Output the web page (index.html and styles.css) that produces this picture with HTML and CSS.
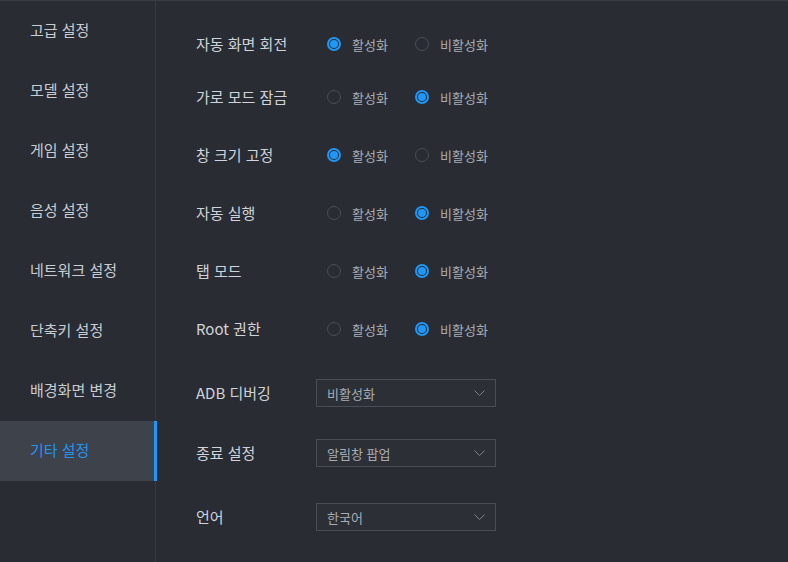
FILE: index.html
```html
<!DOCTYPE html>
<html lang="ko">
<head>
<meta charset="utf-8">
<link rel="stylesheet" href="styles.css">
</head>
<body>
<div class="app">
  <nav class="sidebar">
    <div class="nav-item">고급 설정</div>
    <div class="nav-item">모델 설정</div>
    <div class="nav-item">게임 설정</div>
    <div class="nav-item">음성 설정</div>
    <div class="nav-item">네트워크 설정</div>
    <div class="nav-item">단축키 설정</div>
    <div class="nav-item">배경화면 변경</div>
    <div class="nav-item active">기타 설정</div>
  </nav>
  <main class="content">
    <div class="row r1">
      <div class="label">자동 화면 회전</div>
      <div class="radios">
        <span class="radio on"></span><span class="opt">활성화</span>
        <span class="radio"></span><span class="opt">비활성화</span>
      </div>
    </div>
    <div class="row r2">
      <div class="label">가로 모드 잠금</div>
      <div class="radios">
        <span class="radio"></span><span class="opt">활성화</span>
        <span class="radio on"></span><span class="opt">비활성화</span>
      </div>
    </div>
    <div class="row r3">
      <div class="label">창 크기 고정</div>
      <div class="radios">
        <span class="radio on"></span><span class="opt">활성화</span>
        <span class="radio"></span><span class="opt">비활성화</span>
      </div>
    </div>
    <div class="row r3">
      <div class="label">자동 실행</div>
      <div class="radios">
        <span class="radio"></span><span class="opt">활성화</span>
        <span class="radio on"></span><span class="opt">비활성화</span>
      </div>
    </div>
    <div class="row r3">
      <div class="label">탭 모드</div>
      <div class="radios">
        <span class="radio"></span><span class="opt">활성화</span>
        <span class="radio on"></span><span class="opt">비활성화</span>
      </div>
    </div>
    <div class="row r3">
      <div class="label">Root 권한</div>
      <div class="radios">
        <span class="radio"></span><span class="opt">활성화</span>
        <span class="radio on"></span><span class="opt">비활성화</span>
      </div>
    </div>
    <div class="row r4">
      <div class="label">ADB 디버깅</div>
      <div class="select"><span>비활성화</span>
        <svg class="chev" width="11" height="7" viewBox="0 0 11 7"><polyline points="0.5,0.5 5.5,5.5 10.5,0.5" fill="none" stroke="#7d8189" stroke-width="1"/></svg>
      </div>
    </div>
    <div class="row r5">
      <div class="label">종료 설정</div>
      <div class="select"><span>알림창 팝업</span>
        <svg class="chev" width="11" height="7" viewBox="0 0 11 7"><polyline points="0.5,0.5 5.5,5.5 10.5,0.5" fill="none" stroke="#7d8189" stroke-width="1"/></svg>
      </div>
    </div>
    <div class="row r4">
      <div class="label">언어</div>
      <div class="select"><span>한국어</span>
        <svg class="chev" width="11" height="7" viewBox="0 0 11 7"><polyline points="0.5,0.5 5.5,5.5 10.5,0.5" fill="none" stroke="#7d8189" stroke-width="1"/></svg>
      </div>
    </div>
  </main>
</div>
</body>
</html>
```
FILE: styles.css
```css
html, body {
  margin: 0;
  padding: 0;
  background: #292c33;
  height: 100%;
  overflow: hidden;
}
body {
  font-family: "Noto Sans CJK KR", "Noto Sans", sans-serif;
  color: #c9ced6;
}
.app {
  display: flex;
  height: 562px;
  border-top: 1px solid #3a3d44;
  box-sizing: border-box;
}
.sidebar {
  width: 156px;
  flex: none;
  border-right: 1px solid #363940;
  box-sizing: border-box;
  display: flex;
  flex-direction: column;
}
.nav-item {
  height: 60px;
  box-sizing: border-box;
  padding-bottom: 3px;
  display: flex;
  align-items: center;
  padding-left: 30px;
  font-size: 15px;
  color: #c8ccd3;
  position: relative;
}
.nav-item.active {
  background: #3e424b;
  color: #2196f3;
}
.nav-item.active::after {
  content: "";
  position: absolute;
  right: -2px;
  top: 0;
  bottom: 0;
  width: 3px;
  background: #1e96fa;
}
.content {
  flex: 1;
  padding: 29px 0 0 40px;
  display: flex;
  flex-direction: column;
}
.row {
  height: 28px;
  display: flex;
  align-items: center;
}
.r2 { margin-top: 25px; }
.r3 { margin-top: 30px; }
.r4 { margin-top: 36px; }
.r5 { margin-top: 32px; }
.label {
  width: 120px;
  font-size: 15px;
  color: #d0d4da;
  flex: none;
  padding-bottom: 1px;
}
.radios {
  display: flex;
  align-items: center;
  margin-left: 11px;
}
.radio {
  width: 14px;
  height: 14px;
  border-radius: 50%;
  border: 1px solid #4a4e56;
  box-sizing: border-box;
  position: relative;
  flex: none;
}
.radio.on {
  border: 2px solid #1f97f6;
}
.radio.on::after {
  content: "";
  position: absolute;
  left: 1px;
  top: 1px;
  width: 8px;
  height: 8px;
  border-radius: 50%;
  background: #1f97f6;
}
.opt {
  font-size: 13px;
  color: #a8acb3;
  margin-left: 11px;
  width: 63px;
}
.select {
  width: 180px;
  height: 28px;
  box-sizing: border-box;
  border: 1px solid #494d56;
  background: #2c2f36;
  display: flex;
  align-items: center;
  justify-content: space-between;
  padding: 0 10px 0 10px;
  font-size: 13px;
  color: #a8acb3;
}
.chev { display: block; }
```
